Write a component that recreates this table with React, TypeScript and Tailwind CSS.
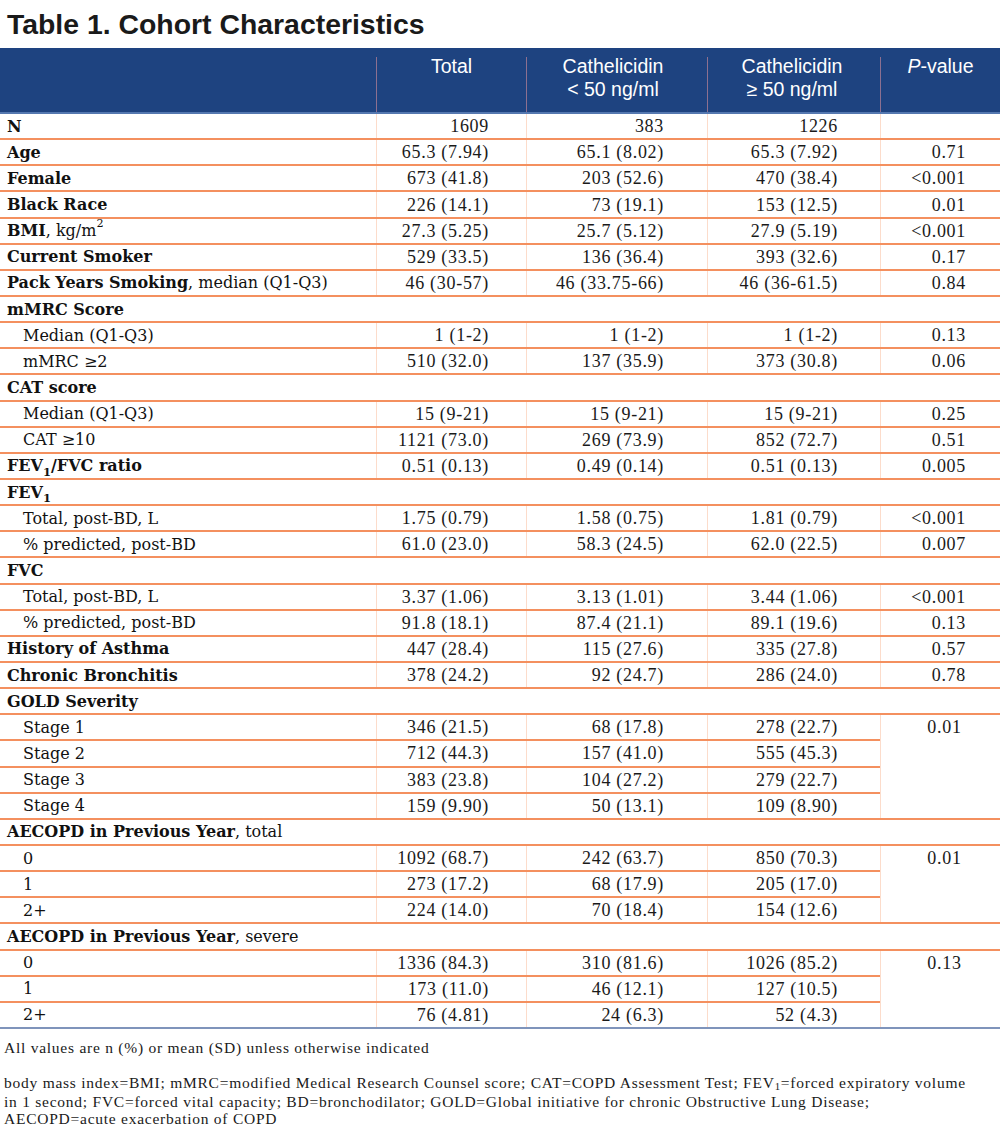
import React from "react";

const cols = [
  "w-[150px] pr-[37px]",
  "w-[181px] pr-[43px]",
  "w-[173px] pr-[42px]",
  "w-[120px] pr-[34px]",
];

const LBL = "font-['DejaVu_Serif',serif] text-[16px] text-[#111]";
const VAL = "font-['Liberation_Serif',serif] text-[18px] tracking-[0.7px] text-[#1a1a1a]";

type Vals = string[];

function Label({ children, indent }: { children: React.ReactNode; indent?: boolean }) {
  return (
    <div className={`w-[376px] shrink-0 flex items-center pt-[1px] whitespace-nowrap ${indent ? "pl-[23px]" : "pl-[7px]"} ${LBL}`}>
      {children}
    </div>
  );
}

function DataRow({ label, indent, vals }: { label: React.ReactNode; indent?: boolean; vals: Vals }) {
  return (
    <div className="flex h-[26.15px] border-b-2 border-[#f4905f]">
      <Label indent={indent}>{label}</Label>
      {vals.map((v, i) => (
        <div key={i} className={`${cols[i]} shrink-0 border-l border-[#fcdccb] flex items-center justify-end pt-[1px] ${VAL}`}>
          {v}
        </div>
      ))}
    </div>
  );
}

function SectionRow({ children }: { children: React.ReactNode }) {
  return (
    <div className={`flex h-[26.15px] border-b-2 border-[#f4905f] items-center pt-[1px] pl-[7px] whitespace-nowrap ${LBL}`}>
      {children}
    </div>
  );
}

function Group({ rows, p, last }: { rows: [string, Vals][]; p: string; last?: boolean }) {
  return (
    <div className={`flex border-b-2 ${last ? "border-[#7f94bb]" : "border-[#f4905f]"}`}>
      <div className="w-[880px] shrink-0">
        {rows.map(([l, v], idx) => (
          <div
            key={idx}
            className={`flex ${idx === rows.length - 1 ? "h-[24.15px]" : "h-[26.15px] border-b-2 border-[#f4905f]"}`}
          >
            <Label indent>{l}</Label>
            {v.map((x, i) => (
              <div key={i} className={`${cols[i]} shrink-0 border-l border-[#fcdccb] flex items-center justify-end pt-[1px] ${VAL}`}>
                {x}
              </div>
            ))}
          </div>
        ))}
      </div>
      <div className="w-[120px] shrink-0 border-l border-[#fcdccb]">
        <div className={`h-[24.15px] flex items-center justify-center pt-[1px] pl-[8px] ${VAL}`}>{p}</div>
      </div>
    </div>
  );
}

const Sub1 = () => <sub className="text-[0.72em] align-[-0.15em] leading-none">1</sub>;

export default function App() {
  return (
    <div className="w-[1000px] bg-white text-black">
      <div className="h-[48px] pt-[8px] pl-[7px]">
        <h1 className="font-['Liberation_Sans',Arial,sans-serif] font-bold text-[28.4px] leading-[32px] text-[#1a1a1a]">
          Table 1. Cohort Characteristics
        </h1>
      </div>

      <div className="flex h-[66px] bg-[#1e4380] border-b-2 border-[#5578b0] text-white font-['Liberation_Sans',Arial,sans-serif] text-[19.5px] leading-[23px]">
        <div className="w-[376px] shrink-0" />
        <div className="w-[150px] shrink-0 mt-[9px] border-l border-[#8d7090] text-center">
          <div className="-mt-[2px]">Total</div>
        </div>
        <div className="w-[181px] shrink-0 mt-[9px] border-l border-[#8d7090] text-center">
          <div className="-mt-[2px] pr-[8px]">
            Cathelicidin
            <br />
            &lt; 50 ng/ml
          </div>
        </div>
        <div className="w-[173px] shrink-0 mt-[9px] border-l border-[#8d7090] text-center">
          <div className="-mt-[2px] pr-[4px]">
            Cathelicidin
            <br />≥ 50 ng/ml
          </div>
        </div>
        <div className="w-[120px] shrink-0 mt-[9px] border-l border-[#8d7090] text-center">
          <div className="-mt-[2px]">
            <i>P</i>-value
          </div>
        </div>
      </div>

      <div>
        <DataRow label={<b>N</b>} vals={["1609", "383", "1226", ""]} />
        <DataRow label={<b>Age</b>} vals={["65.3 (7.94)", "65.1 (8.02)", "65.3 (7.92)", "0.71"]} />
        <DataRow label={<b>Female</b>} vals={["673 (41.8)", "203 (52.6)", "470 (38.4)", "<0.001"]} />
        <DataRow label={<b>Black Race</b>} vals={["226 (14.1)", "73 (19.1)", "153 (12.5)", "0.01"]} />
        <DataRow
          label={
            <span>
              <b>BMI</b>, kg/m<sup className="text-[0.7em] align-[0.35em] leading-none">2</sup>
            </span>
          }
          vals={["27.3 (5.25)", "25.7 (5.12)", "27.9 (5.19)", "<0.001"]}
        />
        <DataRow label={<b>Current Smoker</b>} vals={["529 (33.5)", "136 (36.4)", "393 (32.6)", "0.17"]} />
        <DataRow
          label={
            <span>
              <b>Pack Years Smoking</b>, median (Q1-Q3)
            </span>
          }
          vals={["46 (30-57)", "46 (33.75-66)", "46 (36-61.5)", "0.84"]}
        />
        <SectionRow>
          <b>mMRC Score</b>
        </SectionRow>
        <DataRow indent label="Median (Q1-Q3)" vals={["1 (1-2)", "1 (1-2)", "1 (1-2)", "0.13"]} />
        <DataRow indent label="mMRC ≥2" vals={["510 (32.0)", "137 (35.9)", "373 (30.8)", "0.06"]} />
        <SectionRow>
          <b>CAT score</b>
        </SectionRow>
        <DataRow indent label="Median (Q1-Q3)" vals={["15 (9-21)", "15 (9-21)", "15 (9-21)", "0.25"]} />
        <DataRow indent label="CAT ≥10" vals={["1121 (73.0)", "269 (73.9)", "852 (72.7)", "0.51"]} />
        <DataRow
          label={
            <b>
              FEV
              <Sub1 />
              /FVC ratio
            </b>
          }
          vals={["0.51 (0.13)", "0.49 (0.14)", "0.51 (0.13)", "0.005"]}
        />
        <SectionRow>
          <b>
            FEV
            <Sub1 />
          </b>
        </SectionRow>
        <DataRow indent label="Total, post-BD, L" vals={["1.75 (0.79)", "1.58 (0.75)", "1.81 (0.79)", "<0.001"]} />
        <DataRow indent label="% predicted, post-BD" vals={["61.0 (23.0)", "58.3 (24.5)", "62.0 (22.5)", "0.007"]} />
        <SectionRow>
          <b>FVC</b>
        </SectionRow>
        <DataRow indent label="Total, post-BD, L" vals={["3.37 (1.06)", "3.13 (1.01)", "3.44 (1.06)", "<0.001"]} />
        <DataRow indent label="% predicted, post-BD" vals={["91.8 (18.1)", "87.4 (21.1)", "89.1 (19.6)", "0.13"]} />
        <DataRow label={<b>History of Asthma</b>} vals={["447 (28.4)", "115 (27.6)", "335 (27.8)", "0.57"]} />
        <DataRow label={<b>Chronic Bronchitis</b>} vals={["378 (24.2)", "92 (24.7)", "286 (24.0)", "0.78"]} />
        <SectionRow>
          <b>GOLD Severity</b>
        </SectionRow>
        <Group
          p="0.01"
          rows={[
            ["Stage 1", ["346 (21.5)", "68 (17.8)", "278 (22.7)"]],
            ["Stage 2", ["712 (44.3)", "157 (41.0)", "555 (45.3)"]],
            ["Stage 3", ["383 (23.8)", "104 (27.2)", "279 (22.7)"]],
            ["Stage 4", ["159 (9.90)", "50 (13.1)", "109 (8.90)"]],
          ]}
        />
        <SectionRow>
          <span>
            <b>AECOPD in Previous Year</b>, total
          </span>
        </SectionRow>
        <Group
          p="0.01"
          rows={[
            ["0", ["1092 (68.7)", "242 (63.7)", "850 (70.3)"]],
            ["1", ["273 (17.2)", "68 (17.9)", "205 (17.0)"]],
            ["2+", ["224 (14.0)", "70 (18.4)", "154 (12.6)"]],
          ]}
        />
        <SectionRow>
          <span>
            <b>AECOPD in Previous Year</b>, severe
          </span>
        </SectionRow>
        <Group
          last
          p="0.13"
          rows={[
            ["0", ["1336 (84.3)", "310 (81.6)", "1026 (85.2)"]],
            ["1", ["173 (11.0)", "46 (12.1)", "127 (10.5)"]],
            ["2+", ["76 (4.81)", "24 (6.3)", "52 (4.3)"]],
          ]}
        />
      </div>

      <div className="pl-[4px] pt-[10px] font-['Liberation_Serif',serif] text-[15.5px] leading-[17px] tracking-[0.75px] text-[#1a1a1a] whitespace-nowrap">
        <div>All values are n (%) or mean (SD) unless otherwise indicated</div>
        <div className="mt-[18px]">
          <div>
            body mass index=BMI; mMRC=modified Medical Research Counsel score; CAT=COPD Assessment Test; FEV
            <span className="text-[0.7em] relative top-[0.15em]">1</span>=forced expiratory volume
          </div>
          <div>
            in 1 second; FVC=forced vital capacity; BD=bronchodilator; GOLD=Global initiative for chronic Obstructive Lung Disease;
          </div>
          <div>AECOPD=acute exacerbation of COPD</div>
        </div>
      </div>
    </div>
  );
}
